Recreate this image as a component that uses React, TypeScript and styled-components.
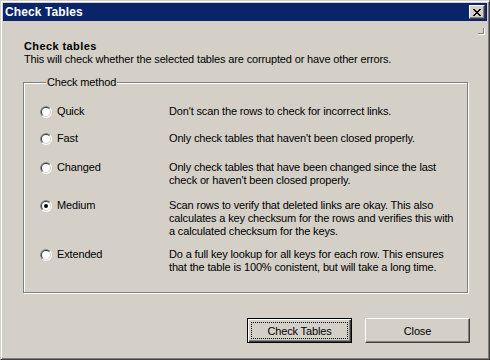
import styled, { createGlobalStyle } from 'styled-components';

const GlobalStyle = createGlobalStyle`
  html, body {
    margin: 0;
    padding: 0;
    background: #d4d0c8;
  }
  body {
    font-family: 'Liberation Sans', Arial, sans-serif;
    font-size: 11px;
    letter-spacing: -0.15px;
    color: #000;
  }
`;

const StyledWindow = styled.div`
  box-sizing: border-box;
  width: 490px;
  height: 360px;
  display: flex;
  flex-direction: column;
  padding: 2px;
  background: #d4d0c8;
  border: 1px solid;
  border-color: #d4d0c8 #404040 #404040 #d4d0c8;
  box-shadow: inset 1px 1px 0 #fff, inset -1px -1px 0 #808080;
`;

const StyledTitleBar = styled.div`
  height: 18px;
  display: flex;
  align-items: center;
  justify-content: space-between;
  background: #0a246a;
  padding: 0 2px;
`;

const StyledTitle = styled.span`
  color: #fff;
  font-weight: bold;
  font-size: 12px;
  letter-spacing: 0.1px;
  line-height: 14px;
`;

const StyledCaptionBtn = styled.button`
  box-sizing: border-box;
  width: 16px;
  height: 14px;
  padding: 0;
  display: flex;
  align-items: center;
  justify-content: center;
  background: #d4d0c8;
  border: 1px solid;
  border-color: #fff #404040 #404040 #fff;
  box-shadow: inset -1px -1px 0 #808080;
`;

const StyledBody = styled.div`
  flex: 1;
  display: flex;
  flex-direction: column;
`;

const StyledGripRow = styled.div`
  display: flex;
  justify-content: flex-end;
  margin-top: 7px;
  padding-right: 2px;
  height: 7px;
`;

const StyledHeading = styled.div`
  margin: 5px 0 0 21px;
  font-weight: bold;
  letter-spacing: 0.4px;
  line-height: 13px;
`;

const StyledIntro = styled.div`
  margin-left: 21px;
  line-height: 13px;
  white-space: nowrap;
`;

const StyledGroup = styled.fieldset`
  box-sizing: border-box;
  width: 445px;
  height: 217px;
  margin: 10px 0 0 20px;
  padding: 16px 0 0 16px;
  border: 1px solid #808080;
  box-shadow: 1px 1px 0 #fff, inset 1px 1px 0 #fff;
  min-inline-size: 0;
`;

const StyledLegend = styled.legend`
  margin-left: 6px;
  padding: 0 1px;
  line-height: 13px;
  background: #d4d0c8;
`;

const StyledOption = styled.div<{ $gap: number }>`
  display: grid;
  grid-template-columns: 129px 1fr;
  margin-top: ${({ $gap }) => $gap}px;
  line-height: 13px;
`;

const StyledChoice = styled.label`
  display: flex;
  align-items: flex-start;
  gap: 5px;
  height: 13px;

  svg {
    flex: none;
    margin-top: 1px;
  }
`;

const StyledDescription = styled.div`
  white-space: nowrap;
`;

const StyledButtons = styled.div`
  display: flex;
  justify-content: flex-end;
  gap: 13px;
  margin-top: 25px;
  padding-right: 17px;
`;

const StyledButton = styled.button<{ $default?: boolean }>`
  box-sizing: border-box;
  width: 105px;
  height: 25px;
  padding: 3px;
  display: flex;
  align-items: stretch;
  font-family: 'Liberation Sans', Arial, sans-serif;
  font-size: 11px;
  letter-spacing: -0.15px;
  color: #000;
  background: #d4d0c8;
  border: 1px solid;
  border-color: ${({ $default }) => ($default ? '#000' : '#fff #404040 #404040 #fff')};
  box-shadow: ${({ $default }) =>
    $default
      ? 'inset 1px 1px 0 #fff, inset -1px -1px 0 #404040, inset -2px -2px 0 #808080'
      : 'inset -1px -1px 0 #808080'};
`;

const StyledFocus = styled.span<{ $show?: boolean }>`
  flex: 1;
  display: flex;
  align-items: center;
  justify-content: center;
  border: 1px dotted ${({ $show }) => ($show ? '#000' : 'transparent')};
`;

const Radio = ({ checked }: { checked?: boolean }) => (
  <svg width="12" height="12" viewBox="0 0 12 12">
    <circle cx="6" cy="6" r="6" fill="#fff" />
    <path d="M1.757 10.243A6 6 0 0 1 10.243 1.757Z" fill="#808080" />
    <circle cx="6" cy="6" r="5" fill="#d4d0c8" />
    <path d="M2.464 9.536A5 5 0 0 1 9.536 2.464Z" fill="#404040" />
    <circle cx="6" cy="6" r="4" fill="#fff" />
    {checked && <circle cx="6" cy="6" r="2" fill="#000" />}
  </svg>
);

const CloseGlyph = () => (
  <svg width="8" height="7" viewBox="0 0 8 7" shapeRendering="crispEdges">
    <path
      d="M0 0h2v1H0zM6 0h2v1H6zM1 1h2v1H1zM5 1h2v1H5zM2 2h4v1H2zM3 3h2v1H3zM2 4h4v1H2zM1 5h2v1H1zM5 5h2v1H5zM0 6h2v1H0zM6 6h2v1H6z"
      fill="#000"
    />
  </svg>
);

const SizeGrip = () => (
  <svg width="7" height="7" viewBox="0 0 7 7" shapeRendering="crispEdges">
    <path d="M5 0h1v6H0V5h5z" fill="#808080" />
    <path d="M6 0h1v7H0V6h6z" fill="#fff" />
  </svg>
);

type Method = {
  name: string;
  lines: string[];
  gap: number;
  checked?: boolean;
};

const methods: Method[] = [
  { name: 'Quick', gap: 0, lines: ["Don't scan the rows to check for incorrect links."] },
  { name: 'Fast', gap: 14, lines: ["Only check tables that haven't been closed properly."] },
  {
    name: 'Changed',
    gap: 16,
    lines: [
      'Only check tables that have been changed since the last',
      "check or haven't been closed properly.",
    ],
  },
  {
    name: 'Medium',
    gap: 12,
    checked: true,
    lines: [
      'Scan rows to verify that deleted links are okay. This also',
      'calculates a key checksum for the rows and verifies this with',
      'a calculated checksum for the keys.',
    ],
  },
  {
    name: 'Extended',
    gap: 10,
    lines: [
      'Do a full key lookup for all keys for each row. This ensures',
      'that the table is 100% conistent, but will take a long time.',
    ],
  },
];

const App = () => (
  <>
    <GlobalStyle />
    <StyledWindow>
      <StyledTitleBar>
        <StyledTitle>Check Tables</StyledTitle>
        <StyledCaptionBtn type="button" aria-label="Close">
          <CloseGlyph />
        </StyledCaptionBtn>
      </StyledTitleBar>

      <StyledBody>
        <StyledGripRow>
          <SizeGrip />
        </StyledGripRow>
        <StyledHeading>Check tables</StyledHeading>
        <StyledIntro>
          This will check whether the selected tables are corrupted or have other errors.
        </StyledIntro>

        <StyledGroup>
          <StyledLegend>Check method</StyledLegend>
          {methods.map((m) => (
            <StyledOption key={m.name} $gap={m.gap}>
              <StyledChoice>
                <Radio checked={m.checked} />
                {m.name}
              </StyledChoice>
              <StyledDescription>
                {m.lines.map((line) => (
                  <div key={line}>{line}</div>
                ))}
              </StyledDescription>
            </StyledOption>
          ))}
        </StyledGroup>

        <StyledButtons>
          <StyledButton type="button" $default>
            <StyledFocus $show>Check Tables</StyledFocus>
          </StyledButton>
          <StyledButton type="button">
            <StyledFocus>Close</StyledFocus>
          </StyledButton>
        </StyledButtons>
      </StyledBody>
    </StyledWindow>
  </>
);

export default App;
